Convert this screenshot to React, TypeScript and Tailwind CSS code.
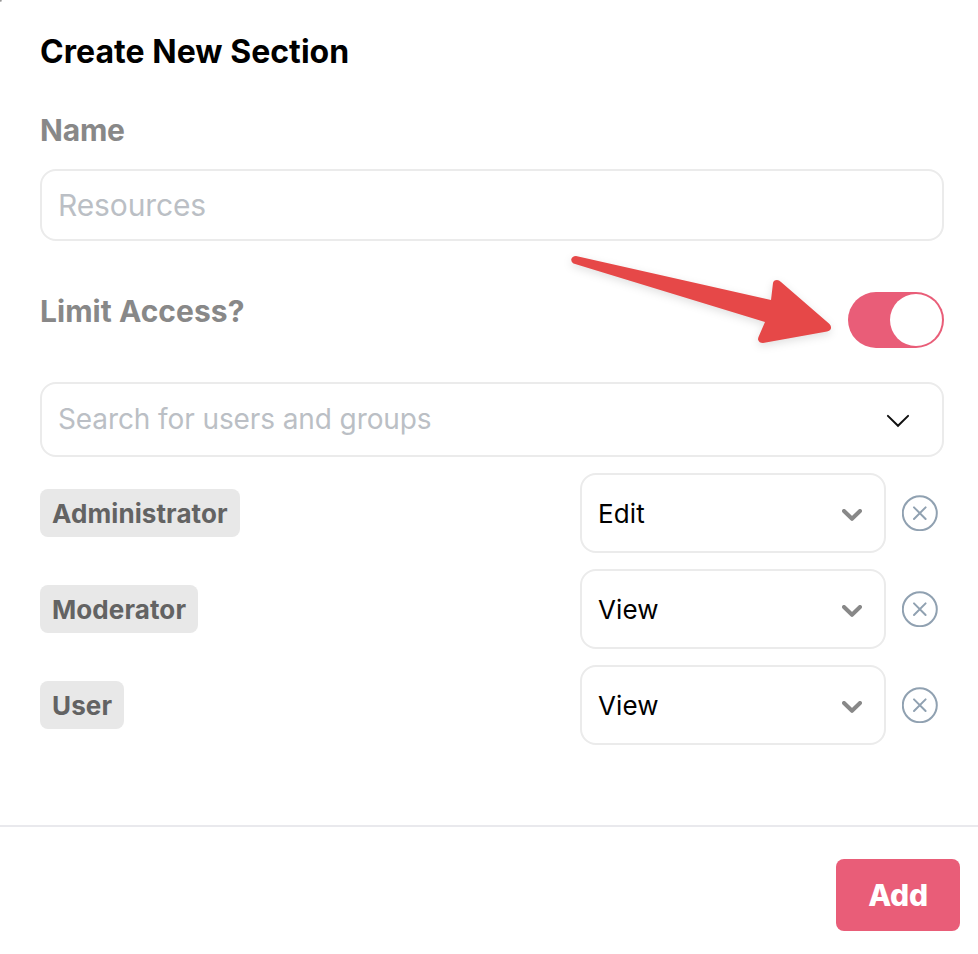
import { useState } from "react";

interface Member {
  name: string;
  access: string;
}

const members: Member[] = [
  { name: "Administrator", access: "Edit" },
  { name: "Moderator", access: "View" },
  { name: "User", access: "View" },
];

export default function App() {
  const [limited, setLimited] = useState(true);

  return (
    <div className="relative w-[978px] h-[954px] overflow-hidden bg-white font-['Inter',sans-serif] text-black">
      {/* Window corner */}
      <div className="absolute left-0 top-0 w-0.5 h-0.5 bg-linear-to-br from-[#777777] to-white" />

      <div className="pl-10 pr-[34px] pt-7">
        <h1 className="text-[32px] leading-[48px] font-bold tracking-[0.04px]">
          Create New Section
        </h1>

        <label className="block mt-[34px] text-[30px] leading-10 font-bold tracking-[-0.2px] text-[#888888]">
          Name
        </label>
        <input
          className="block mt-[19px] w-full h-[72px] px-4 rounded-2xl border-2 border-[#ebebeb] text-[30px] tracking-[-0.13px] outline-none placeholder:text-[#bbbfc5]"
          placeholder="Resources"
        />

        <div className="flex items-start justify-between mt-[51px]">
          <span className="-mt-px text-[30px] leading-10 font-bold tracking-[0.04px] text-[#888888]">
            Limit Access?
          </span>
          <Toggle on={limited} onChange={() => setLimited(!limited)} />
        </div>

        <div className="flex items-center justify-between mt-[34px] h-[75px] pl-4 pr-8 rounded-2xl border-2 border-[#ebebeb]">
          <span className="pb-0.5 text-[28px] tracking-[-0.1px] text-[#bbbfc5]">
            Search for users and groups
          </span>
          <svg className="mt-px" width="24" height="16" viewBox="0 0 24 16" fill="none">
            <path
              d="M1.9 3.9L12 13.8L22.1 3.9"
              stroke="#111111"
              strokeWidth="2"
              strokeLinecap="round"
            />
          </svg>
        </div>

        <div className="flex flex-col gap-4 mt-4">
          {members.map((m) => (
            <MemberRow key={m.name} member={m} />
          ))}
        </div>
      </div>

      {/* Footer */}
      <div className="flex justify-end mt-20 pt-8 pr-[18px] border-t-2 border-[#e9e9ed]">
        <button className="w-[124px] h-[72px] rounded-lg bg-[#e95d78] text-[30px] font-extrabold tracking-[-0.3px] text-white">
          Add
        </button>
      </div>

      <Arrow />
    </div>
  );
}

function MemberRow({ member }: { member: Member }) {
  return (
    <div className="flex items-center h-20">
      <span className="h-12 px-3 rounded-lg bg-[#e8e8e8] text-[26px] leading-[50px] font-bold tracking-[0.1px] text-[#636363]">
        {member.name}
      </span>
      <div className="flex items-center justify-between ml-auto w-[306px] h-20 pl-4 pr-[22px] rounded-2xl border-2 border-[#ebebeb]">
        <span className="text-[26px] tracking-[0.1px]">{member.access}</span>
        <svg className="mt-1" width="20" height="12" viewBox="0 0 20 12" fill="none">
          <path
            d="M2 2L10 9.8L18 2"
            stroke="#888888"
            strokeWidth="4"
            strokeLinecap="round"
            strokeLinejoin="round"
          />
        </svg>
      </div>
      <button className="ml-4 mr-1.5">
        <svg width="36" height="36" viewBox="0 0 36 36" fill="none" stroke="#90a1b1" strokeWidth="2">
          <circle cx="17.8" cy="18.2" r="17" />
          <path d="M12 12.4L23.6 24M23.6 12.4L12 24" strokeLinecap="round" />
        </svg>
      </button>
    </div>
  );
}

function Toggle({ on, onChange }: { on: boolean; onChange: () => void }) {
  return (
    <button
      role="switch"
      aria-checked={on}
      onClick={onChange}
      className={`flex items-center w-24 h-14 p-0.5 rounded-full ${
        on ? "justify-end bg-[#e95d78]" : "justify-start bg-gray-300"
      }`}
    >
      <span className="w-[52px] h-[52px] rounded-full bg-white" />
    </button>
  );
}

// Callout that points at the toggle
function Arrow() {
  return (
    <svg
      className="absolute left-[560px] top-[245px] pointer-events-none drop-shadow-[0_3px_4px_rgba(0,0,0,0.12)]"
      width="284"
      height="114"
      viewBox="560 245 284 114"
      fill="#e64848"
    >
      <path d="M576 256L771 300L773 283Q773.5 280 777 280Q779 280 781 282L829.5 324Q832 327 830.5 329.5Q829.5 331 827 331.5L763 343Q759 343 758 339.5Q758 338 758.5 337L765 322L573.5 263.5Q571 262 571.2 259.5Q572 256 576 256Z" />
    </svg>
  );
}
